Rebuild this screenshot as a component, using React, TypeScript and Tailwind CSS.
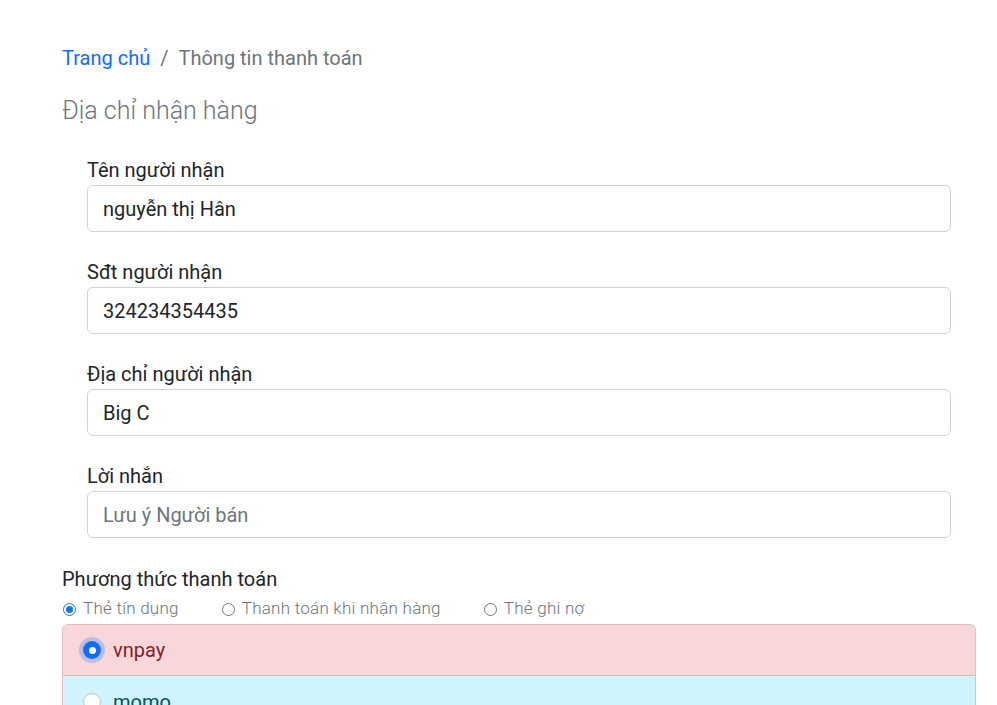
import React from "react";

const fields = [
  { label: "Tên người nhận", value: "nguyễn thị Hân" },
  { label: "Sđt người nhận", value: "324234354435" },
  { label: "Địa chỉ người nhận", value: "Big C" },
  { label: "Lời nhắn", value: "", placeholder: "Lưu ý Người bán" },
];

function SmallRadio({ checked }: { checked?: boolean }) {
  return checked ? (
    <span className="inline-flex h-[13px] w-[13px] shrink-0 items-center justify-center rounded-full border-[1.5px] border-[#1a73e8] bg-white">
      <span className="h-[7px] w-[7px] rounded-full bg-[#1a73e8]" />
    </span>
  ) : (
    <span className="inline-block h-[13px] w-[13px] shrink-0 rounded-full border border-[#767676] bg-white" />
  );
}

export default function App() {
  return (
    <div
      className="min-h-[705px] bg-white text-[#212529]"
      style={{ fontFamily: "Roboto, 'Noto Sans', sans-serif" }}
    >
      <div className="ml-[62px] w-[914px] pt-[43px]">
        <div className="flex items-center text-[20px] leading-[30px]">
          <span className="text-[#0d6efd]">Trang chủ</span>
          <span className="px-[10px] text-[#6c757d]">/</span>
          <span className="text-[#6c757d]">Thông tin thanh toán</span>
        </div>
        <h2 className="mt-[23px] text-[25px] font-light leading-[30px] text-[#6c757d]">
          Địa chỉ nhận hàng
        </h2>
        <div className="mt-[29px] px-[25px]">
          {fields.map((f, i) => (
            <div key={f.label} className={i < fields.length - 1 ? "mb-[25px]" : ""}>
              <div className="text-[20px] leading-[30px]">{f.label}</div>
              <div className="flex h-[47px] items-center rounded-[6px] border border-[#ced4da] px-[15px] text-[20px]">
                {f.value ? (
                  <span>{f.value}</span>
                ) : (
                  <span className="text-[#6c757d]">{f.placeholder}</span>
                )}
              </div>
            </div>
          ))}
        </div>
        <div className="mt-[26px] text-[20px] leading-[30px]">Phương thức thanh toán</div>
        <div className="mt-[3px] flex h-[24px] items-center pl-[1px] text-[17px] font-light text-[#6c757d]">
          <label className="mr-[43px] flex items-center gap-[7px]">
            <SmallRadio checked />
            <span className="tracking-[0.25px]">Thẻ tín dụng</span>
          </label>
          <label className="mr-[43px] flex items-center gap-[7px]">
            <SmallRadio />
            <span className="tracking-[0.25px]">Thanh toán khi nhận hàng</span>
          </label>
          <label className="flex items-center gap-[7px]">
            <SmallRadio />
            <span className="tracking-[0.25px]">Thẻ ghi nợ</span>
          </label>
        </div>
        <div className="mt-[3px] overflow-hidden rounded-t-[6px] border border-b-0 border-[#e6bcc0]">
          <div className="flex h-[51px] items-center border-b border-[#e0b7bb] bg-[#f8d7da] pl-[20px] text-[20px] text-[#842029]">
            <span className="mr-[12px] flex h-[18px] w-[18px] items-center justify-center rounded-full bg-[#0d6efd] shadow-[0_0_0_4px_rgba(13,110,253,0.25)]">
              <span className="h-[7px] w-[7px] rounded-full bg-white" />
            </span>
            vnpay
          </div>
          <div className="flex h-[51px] items-center bg-[#cff4fc] pl-[20px] text-[20px] text-[#055160]">
            <span className="mr-[12px] inline-block h-[18px] w-[18px] rounded-full border border-[#bfc5cb] bg-white" />
            momo
          </div>
        </div>
      </div>
    </div>
  );
}
